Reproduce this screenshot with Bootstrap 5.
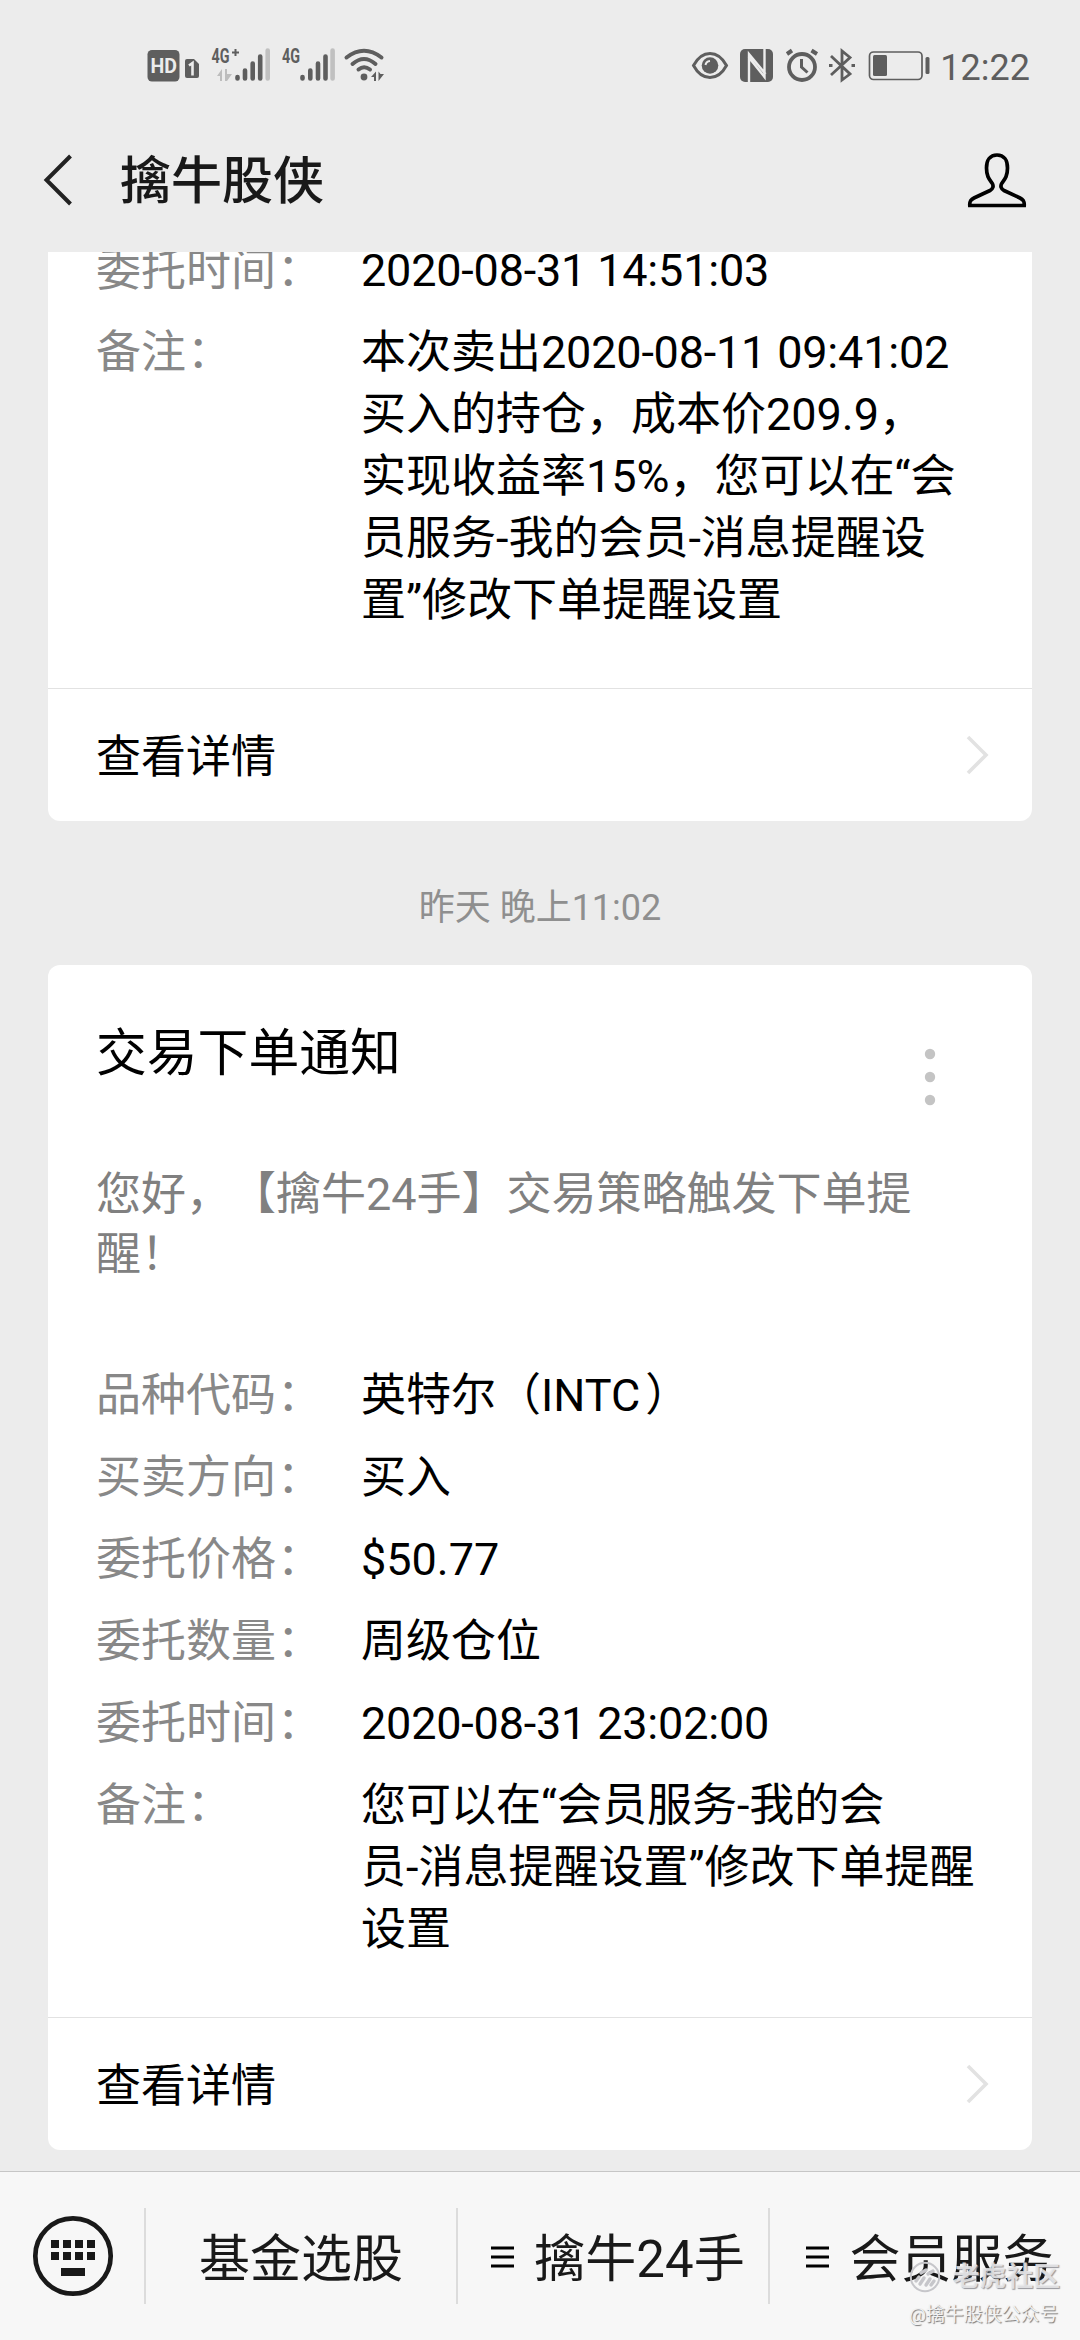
<!DOCTYPE html>
<html lang="zh-CN">
<head>
<meta charset="utf-8">
<meta name="viewport" content="width=device-width, initial-scale=1">
<title>擒牛股侠</title>
<link href="https://cdn.jsdelivr.net/npm/bootstrap@5.3.0/dist/css/bootstrap.min.css" rel="stylesheet">
<style>
html,body{height:2340px;overflow:hidden}
body{background:#ececec;color:#000;font-family:Roboto,"Noto Sans CJK SC",sans-serif;font-size:45px;line-height:62px;text-spacing-trim:space-all;font-feature-settings:"chws" 0}
svg{display:block;flex:none}
.phone{width:1080px;height:2340px}
.top-area{height:252px}
.status{height:132px;color:#5e5e5e;padding:0 50px 0 140px}
.clock{font-size:36px;line-height:40px;padding-top:4px}
.sys-icons{margin-right:5px}
.titlebar{height:96px;padding:0 48px 0 40px}
.chat-name{font-size:51px;font-weight:500;color:#191919;margin-left:45px;line-height:60px;padding-top:3px}
.feed{padding:0 48px 21px;min-height:0}
.msg{border:0;border-radius:12px;background:#fff}
.msg .card-body{padding:0 48px 56px 48px}
.msg .card-footer{background:none;border-top:1px solid #e2e2e2;height:133px;padding:5px 42px 0 48px}
.msg .card-footer svg{margin-bottom:3px}
.fields{row-gap:20px;margin:0}
.key{width:265px;color:#888;font-weight:400}
.key i,.val i{font-style:normal;padding-left:1px}
.val i{padding-left:5px}
.num{letter-spacing:-.2px}
.val{width:0;margin:0}
.when{font-size:36px;line-height:50px;color:#8f8f8f;margin:62px 0 32px}
.msg-title{font-size:50.8px;line-height:62px;font-weight:400;margin:0}
.msg-head{padding:58px 48px 0 0}
.msg-head svg{margin:-1px 0 -24px}
.greet{color:#808080;line-height:60px;margin:80px 0 80px;white-space:nowrap}
.menu{height:169px;background:#f7f7f7;border-top:1px solid #c6c6c6;font-size:51px;line-height:60px;color:#191919}
.kb{width:144px;padding-left:1px}
.entry{height:96px;border-left:2px solid #dcdcdc;width:312px;padding-top:7px}
.entry.sub{padding-left:10px}
.entry svg{margin:0 20px 5px 0}
.stamp{right:20px;bottom:10px;width:151px}
.stamp-a{font-size:26.800px;line-height:46px;font-weight:700;color:rgba(235,235,237,.85);text-shadow:1px 1px 1px rgba(140,140,145,.9)}
.stamp-b{font-size:18.900px;line-height:30px;color:#f2f2f2;text-shadow:1px 1px 1px #777;white-space:nowrap}
</style>
<script src="https://cdn.jsdelivr.net/npm/bootstrap@5.3.0/dist/js/bootstrap.bundle.min.js"></script>
</head>
<body>
<div class="phone d-flex flex-column position-relative overflow-hidden">
  <header class="top-area flex-shrink-0">
    <div class="status d-flex align-items-center">
      <svg width="260" height="50" viewBox="140 42 260 50" fill="#5e5e5e">
        <rect x="147.500" y="51" width="32" height="31.500" rx="4.500"/>
        <text x="150.500" y="74" font-family="Roboto" font-weight="700" font-size="20.500" fill="#ececec" textLength="26.500" lengthAdjust="spacingAndGlyphs">HD</text>
        <path d="M187 60H194L199 65V77Q199 79 197 79H187Q185 79 185 77V62Q185 60 187 60Z"/>
        <path d="M189 66.500L192.500 64V76.500" fill="none" stroke="#ececec" stroke-width="2.600"/>
        <g font-family="Roboto" font-weight="700" font-size="20.500"><text x="211.500" y="63.500" textLength="18" lengthAdjust="spacingAndGlyphs">4G</text><text x="282" y="63.500" textLength="18" lengthAdjust="spacingAndGlyphs">4G</text></g>
        <path d="M232 53.500H239M235.500 50V57" stroke="#5e5e5e" stroke-width="2"/>
        <g stroke="#5e5e5e" stroke-width="4.600" stroke-linecap="round"><path d="M237.500 79.500V78M245 79.500V71.500M252.700 79.500V64.500M260.200 79.500V57.500M302.500 79.500V78M310.300 79.500V71.500M318 79.500V64.500M325.500 79.500V57.500"/><path d="M267.700 79.500V51.500M332.600 79.500V51.500" stroke="#c0c0c0"/></g>
        <path d="M217 77L222 70V82H220V77ZM225 82V70H227V75H232L227 82Z" fill="#bdbdbd"/>
        <g fill="none" stroke="#5e5e5e" stroke-width="4" stroke-linecap="round"><path d="M346.500 58.500Q364 45 381.500 58.500M352.500 65Q364 55 375.500 65M358.500 70.500Q364 66 370 70.500"/></g>
        <circle cx="364" cy="78" r="3.400"/>
        <path d="M371 78L376 72.500V82H374V78ZM378.500 82V72.500L380.500 75H384Z"/>
      </svg>
      <svg class="sys-icons ms-auto" width="250" height="50" viewBox="685 42 250 50" fill="none" stroke="#5e5e5e" stroke-width="3">
        <path d="M693.500 66.500Q700 54.500 710 54.500T726.500 66.500Q720 78.500 710 78.500T693.500 66.500Z"/>
        <circle cx="710" cy="66.500" r="8.300" fill="#5e5e5e" stroke="none"/><path d="M705.500 66Q706 62.500 710 62" stroke="#ececec" stroke-width="2"/>
        <rect x="740" y="50" width="33" height="33" rx="5" fill="#5e5e5e" stroke="none"/>
        <path d="M749 83V55L765.500 75M764.500 50V78L748.500 58" stroke="#ececec" stroke-width="2.400"/>
        <circle cx="802" cy="68" r="13" stroke-width="3.800"/><path d="M801.500 60V68L807.500 73.500"/><path d="M787 55L792 51.500M811.500 51.500L817 55" stroke-width="4"/>
        <path d="M831 57L850 75L842 81V52L850 58.500L831 76" stroke-width="2.800"/><path d="M829 66.500H832.500M851.500 66.500H855"/>
        <rect x="869.500" y="53" width="52.500" height="27.500" rx="4" stroke-width="1.700"/><rect x="873" y="56" width="14" height="21" rx="1.500" fill="#5e5e5e" stroke="none"/><rect x="925.500" y="58" width="4" height="17" rx="1.500" fill="#5e5e5e" stroke="none"/>
      </svg>
      <span class="clock">12:22</span>
    </div>
    <div class="titlebar d-flex align-items-center">
      <svg width="35" height="56" viewBox="0 0 35 56" fill="none" stroke="#222" stroke-width="4"><path d="M30.500 4L6.500 28L30.500 52"/></svg>
      <h1 class="chat-name mb-0">擒牛股侠</h1>
      <svg class="ms-auto" width="70" height="60" viewBox="961 150 70 60" fill="none" stroke="#000" stroke-width="3.700"><path d="M996 155C989 155 985.500 160.500 985.500 168C985.500 176 988 179 991 183C993 186 992 189 989 190.500L973 198C969 200 968.500 202 968.800 205.500H1023.200C1023.500 202 1023 200 1019 198L1003 190.500C1000 189 999 186 1001 183C1004 179 1006.500 176 1006.500 168C1006.500 160.500 1003 155 996 155Z"/></svg>
    </div>
  </header>

  <main class="feed flex-grow-1 overflow-hidden d-flex flex-column justify-content-end">
    <article class="card msg flex-shrink-0">
      <div class="card-body">
        <dl class="fields d-flex flex-column">
          <div class="d-flex"><dt class="key">委托时间<i>：</i></dt><dd class="val num flex-grow-1">2020-08-31 14:51:03</dd></div>
          <div class="d-flex"><dt class="key">备注<i>：</i></dt><dd class="val flex-grow-1">本次卖出<span class="num">2020-08-11 09:41:02</span><br>买入的持仓，成本价209.9，<br>实现收益率15%，您可以在“会<br>员服务-我的会员-消息提醒设<br>置”修改下单提醒设置</dd></div>
        </dl>
      </div>
      <div class="card-footer d-flex align-items-center justify-content-between"><span>查看详情</span>
        <svg width="24" height="42" viewBox="0 0 24 42" fill="none" stroke="#e2e2e2" stroke-width="3.600"><path d="M2 2L20 20L2 38"/></svg></div>
    </article>
    <time class="when d-block text-center flex-shrink-0">昨天 晚上11:02</time>
    <article class="card msg flex-shrink-0">
      <div class="card-body">
        <div class="msg-head d-flex justify-content-between">
          <h2 class="msg-title">交易下单通知</h2>
          <svg width="12" height="86" viewBox="0 0 12 86" fill="#c4c4c4"><circle cx="6" cy="32" r="5.200"/><circle cx="6" cy="55" r="5.200"/><circle cx="6" cy="78" r="5.200"/></svg>
        </div>
        <p class="greet"><span class="d-inline-block">您好，</span><span class="d-inline-block">【擒牛24手】</span><span class="d-inline-block">交易策略触发下单提</span><br>醒！</p>
        <dl class="fields d-flex flex-column">
          <div class="d-flex"><dt class="key">品种代码<i>：</i></dt><dd class="val flex-grow-1">英特尔（INTC<i>）</i></dd></div>
          <div class="d-flex"><dt class="key">买卖方向<i>：</i></dt><dd class="val flex-grow-1">买入</dd></div>
          <div class="d-flex"><dt class="key">委托价格<i>：</i></dt><dd class="val flex-grow-1">$50.77</dd></div>
          <div class="d-flex"><dt class="key">委托数量<i>：</i></dt><dd class="val flex-grow-1">周级仓位</dd></div>
          <div class="d-flex"><dt class="key">委托时间<i>：</i></dt><dd class="val num flex-grow-1">2020-08-31 23:02:00</dd></div>
          <div class="d-flex"><dt class="key">备注<i>：</i></dt><dd class="val flex-grow-1">您可以在“会员服务-我的会<br>员-消息提醒设置”修改下单提醒<br>设置</dd></div>
        </dl>
      </div>
      <div class="card-footer d-flex align-items-center justify-content-between"><span>查看详情</span>
        <svg width="24" height="42" viewBox="0 0 24 42" fill="none" stroke="#e2e2e2" stroke-width="3.600"><path d="M2 2L20 20L2 38"/></svg></div>
    </article>
  </main>

  <nav class="menu d-flex align-items-center flex-shrink-0">
    <div class="kb d-flex justify-content-center"><svg width="82" height="84" viewBox="-41 -42 82 84" fill="#191919"><circle r="37.700" fill="none" stroke="#191919" stroke-width="4.700"/><path d="M-22-16h8v8h-8zM-10-16h8v8h-8zM2-16h8v8h-8zM14-16h8v8h-8zM-22-4h8v8h-8zM-10-4h8v8h-8zM2-4h8v8h-8zM14-4h8v8h-8zM-12 12h24v8h-24z"/></svg></div>
    <div class="entry d-flex align-items-center justify-content-center">基金选股</div>
    <div class="entry sub d-flex align-items-center justify-content-center"><svg width="23" height="24" viewBox="0 0 23 24" stroke="#000" stroke-width="3"><path d="M0 3H23M0 12H23M0 21H23"/></svg>擒牛24手</div>
    <div class="entry sub d-flex align-items-center justify-content-center"><svg width="23" height="24" viewBox="0 0 23 24" stroke="#000" stroke-width="3"><path d="M0 3H23M0 12H23M0 21H23"/></svg>会员服务</div>
  </nav>

  <div class="stamp position-absolute">
    <div class="stamp-a d-flex align-items-center justify-content-between">
      <svg width="32" height="32" viewBox="0 0 32 32" fill="none" stroke="#c6c6ca" stroke-width="2"><circle cx="16" cy="16" r="14.200"/><path d="M7 20L10 16M11 23L15 17M17 24L21 18M12 12L17 9M19 13L24 10M22 24L25 20" stroke-width="3.400" stroke-linecap="round"/></svg>
      <span>老虎社区</span></div>
    <div class="stamp-b">@擒牛股侠公众号</div>
  </div>
</div>
</body>
</html>
